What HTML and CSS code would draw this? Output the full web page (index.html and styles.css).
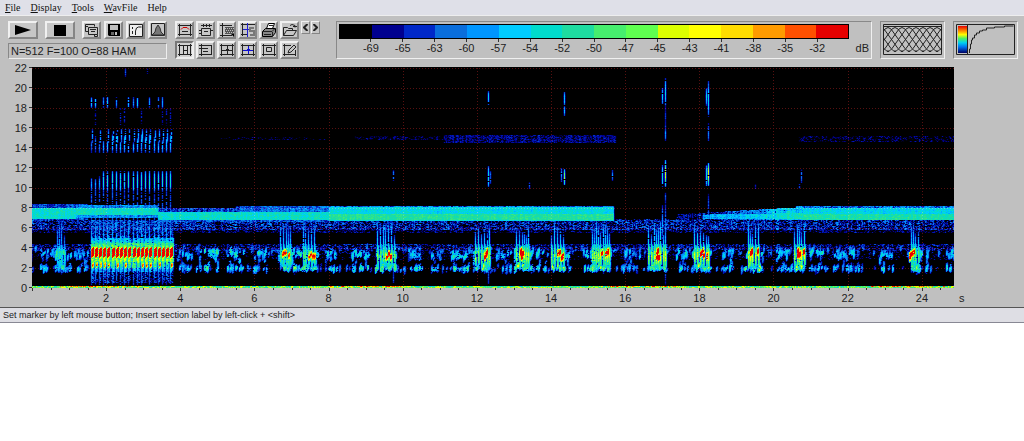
FILE: index.html
```html
<!DOCTYPE html>
<html lang="en">
<head>
  <meta charset="utf-8">
  <title>Spectrogram</title>
  <link rel="stylesheet" href="styles.css">
</head>
<body>
  <nav class="menubar">
    <a href="#file"><u>F</u>ile</a>
    <a href="#display"><u>D</u>isplay</a>
    <a href="#tools"><u>T</u>ools</a>
    <a href="#wavfile"><u>W</u>avFile</a>
    <a href="#help">Help</a>
  </nav>

  <main class="workspace">
    <header class="toolbar">
      <section class="transport">
        <div class="row">
          <button class="wide" aria-label="Play"><svg width="16" height="10"><path d="M0 0L16 5L0 10z"/></svg></button>
          <button class="wide" aria-label="Stop"><svg width="12" height="11"><path d="M0 0h12v11h-12z"/></svg></button>
          <div class="icons">
            <button aria-label="Copy"><svg class="icon" viewBox="0 0 14 14"><path class="line" d="M3.5 8.5h-3v-7h9v2M3.5 4.5h9v7h-9zM5 6.5h6M6 8.500h4M1 3.500h2M9.500 11.500v2h3v-2"/></svg></button>
            <button aria-label="Save"><svg class="icon" viewBox="0 0 14 14"><path d="M1 1h12v12H2l-1-1z"/><path fill="#c0c0c0" d="M3 2h8v5H3zM8 9h2v3H8z"/><path fill="#666" d="M4 9h3v3H4z"/></svg></button>
            <button aria-label="Transfer curve"><svg class="icon" viewBox="0 0 14 14"><path fill="#eee" d="M1 2h12v11H1z"/><path class="line" d="M.5 1.500h13v12h-13zM3.500 4v2M3.500 8v3M6.500 12V8l1-3 2-1h3"/></svg></button>
            <button aria-label="Spectrum"><svg class="icon" viewBox="0 0 14 14"><path class="line" d="M.5.5h13v12h-13z"/><path fill="#777" stroke="#333" d="M1 12l3-3 1-4 2-3 2 3 1 4 3 3z"/></svg></button>
          </div>
        </div>
        <output class="params">N=512 F=100 O=88 HAM</output>
      </section>

      <section class="tools">
        <button aria-label="Section label"><svg class="icon" viewBox="0 0 14 14"><path class="line" d="M0 2.500h14M0 11.500h14M1.500 1v12M12.500 1v12M4 8.500h6"/><path fill="none" stroke="#d00000" d="M3 6.500l2-2h4l2 2"/></svg></button>
        <button aria-label="Section width"><svg class="icon" viewBox="0 0 14 14"><path class="line" d="M2.500 5.500h9v7h-9zM0 7.500h2M0 10.500h2M12 7.500h2M5 8.500h4M2 2.500h11M4.500 1v3M7.500 1v3M10.500 1v3"/></svg></button>
        <button aria-label="Selection"><svg class="icon" viewBox="0 0 14 14"><path class="line" d="M0 2.500h12M2.500 0v14M0 12.500h12"/><path fill="#555" d="M5 4h9v7H5z"/><path fill="none" stroke="#c0c0c0" stroke-dasharray="1 1" d="M5 5.500h9M6 7.500h8M5 9.500h9"/><path d="M11 11h3v3z"/></svg></button>
        <button aria-label="Spectrum cursor"><svg class="icon" viewBox="0 0 14 14"><path class="line" d="M0 1.500h14M0 11.500h7M1.500 0v13"/><path fill="none" stroke="#2020d0" d="M6.500 0v14M2 6.500h6"/><path fill="none" stroke="#777" stroke-width="2" d="M13 5h-4v3h4v4H9"/></svg></button>
        <button aria-label="Print"><svg class="icon" viewBox="0 0 14 14"><path fill="#fff" stroke="#000" d="M4.500 5.500l2-5h6l-2 5z"/><path fill="#888" stroke="#000" d="M.5 8.500l3-3h10v4l-3 4h-10z"/><path class="line" d="M1 8.500h9l3-3M10.500 9v4M2 11.500h7M7 2.500h4"/></svg></button>
        <button aria-label="Open"><svg class="icon" viewBox="0 0 14 14"><path class="line" d="M.5 12.500v-8h4l1 1h4v2M.5 12.500l3-5h10l-3 5zM7 2.500l2-1 3 1v2M10 3.500h4"/></svg></button>
        <div class="steps">
          <button class="step" aria-label="Previous"><svg width="5" height="7"><path class="line bold" d="M4.500 0L1 3.500 4.500 7"/></svg></button>
          <button class="step" aria-label="Next"><svg width="5" height="7"><path class="line bold" d="M.5 0L4 3.500.5 7"/></svg></button>
        </div>
        <button class="pressed" aria-label="Marker mode" aria-pressed="true"><svg class="icon" viewBox="0 0 14 14"><path class="line" d="M0 2.500h14M0 11.500h14M1.500 1v12M5.500 2v10M9.500 2v10M12.500 1v12M6 7.500h3"/></svg></button>
        <button aria-label="Frequency marker"><svg class="icon" viewBox="0 0 14 14"><path class="line" d="M0 2.500h13M0 11.500h13M2.500 1v12M12.500 2v10M0 5.500h9M4 8.500h5"/></svg></button>
        <button aria-label="Cross cursor"><svg class="icon" viewBox="0 0 14 14"><path class="line" d="M0 2.500h14M0 11.500h14M1.500 1v12M12.500 1v12M2 7.500h11M7.500 2v10M6 6.500h3"/></svg></button>
        <button aria-label="Free cursor"><svg class="icon" viewBox="0 0 14 14"><path class="line" d="M0 2.500h14M0 11.500h14M1.500 1v12M12.500 1v12"/><path fill="none" stroke="#1010d0" d="M2 7.500h10M7.500 3v8M6 6.500h3"/></svg></button>
        <button aria-label="Zoom area"><svg class="icon" viewBox="0 0 14 14"><path class="line" d="M0 2.500h14M0 11.500h14M1.500 1v12M12.500 1v12M4.500 4.500h5v4h-5z"/></svg></button>
        <button aria-label="Edit labels"><svg class="icon" viewBox="0 0 14 14"><path class="line" d="M0 2.500h8M0 11.500h13M1.500 1v12M12.500 7v6M5 10l1-3 5-5 2 2-5 5z"/></svg></button>
      </section>

      <section class="panel scale">
        <div class="scale-bar">
          <i class="c0"></i><i class="c1"></i><i class="c2"></i><i class="c3"></i><i class="c4"></i><i class="c5"></i><i class="c6"></i><i class="c7"></i><i class="c8"></i><i class="c9"></i><i class="c10"></i><i class="c11"></i><i class="c12"></i><i class="c13"></i><i class="c14"></i><i class="c15"></i>
        </div>
        <div class="scale-labels">
          <span>-69</span><span>-65</span><span>-63</span><span>-60</span><span>-57</span><span>-54</span><span>-52</span><span>-50</span><span>-47</span><span>-45</span><span>-43</span><span>-41</span><span>-38</span><span>-35</span><span>-32</span>
        </div>
        <span class="unit">dB</span>
      </section>

      <section class="panel">
        <svg class="preview" viewBox="0 0 59 32">
          <defs><path id="bell" d="M-22 27.500q3 0 5-3L-3 5q3-3 6 0L17 24.500q2 3 5 3"/></defs>
          <g class="line">
            <use href="#bell" x="-16"/><use href="#bell" x="-9"/><use href="#bell" x="-2"/><use href="#bell" x="5"/><use href="#bell" x="12"/><use href="#bell" x="19"/><use href="#bell" x="26"/><use href="#bell" x="33"/><use href="#bell" x="40"/><use href="#bell" x="47"/><use href="#bell" x="54"/><use href="#bell" x="61"/><use href="#bell" x="68"/><use href="#bell" x="75"/>
            <path d="M0 2.500h59M.5.500h58v30h-58z"/>
          </g>
        </svg>
      </section>

      <section class="panel">
        <svg class="preview" viewBox="0 0 59 32">
          <defs>
            <linearGradient id="rainbow" x2="0" y2="1">
              <stop offset="0" stop-color="#e60000"/><stop offset=".2" stop-color="#ff9b00"/><stop offset=".32" stop-color="#ffff00"/><stop offset=".46" stop-color="#50f060"/><stop offset=".62" stop-color="#00d0f0"/><stop offset=".78" stop-color="#0070f0"/><stop offset="1" stop-color="#000060"/>
            </linearGradient>
          </defs>
          <path fill="url(#rainbow)" d="M2 2h9v27H2z"/>
          <path class="line" d="M.5.500h58v30h-58zM11.500 0v31M13.500 29v-4h1v-5h1v-4h1v-2h2v-3h2v-2h3v-2h3v-1h4v-2h8v-1h10v-1h9"/>
        </svg>
      </section>
    </header>

    <figure class="plot">
      <div class="y-axis">
        <span>22</span><span>20</span><span>18</span><span>16</span><span>14</span><span>12</span><span>10</span><span>8</span><span>6</span><span>4</span><span>2</span><span>0</span>
      </div>
      <canvas class="spectrogram" id="spectrogram"></canvas>
      <div class="x-axis">
        <span>2</span><span>4</span><span>6</span><span>8</span><span>10</span><span>12</span><span>14</span><span>16</span><span>18</span><span>20</span><span>22</span><span>24</span>
      </div>
      <span class="x-unit">s</span>
    </figure>
  </main>

  <footer class="statusbar">Set marker by left mouse button; Insert section label by left-click + &lt;shift&gt;</footer>

  <script src="spectrogram.js"></script>
</body>
</html>
```
FILE: styles.css
```css
* {
  box-sizing: border-box;
}

body {
  margin: 0;
  background: #fff;
  color: #222;
  font: 11px/12px "Liberation Sans", Arial, sans-serif;
}

.menubar {
  display: flex;
  gap: 10px;
  height: 15px;
  padding-left: 5px;
  background: #dfe0e8;
  font: 10px/15px "Liberation Serif", "Times New Roman", serif;
}

.menubar a {
  color: #111;
  text-decoration: none;
}

.workspace {
  background: #c0c0c0;
  border-top: 1px solid #eee;
  border-bottom: 1px solid #555;
}

.toolbar {
  display: flex;
  align-items: flex-start;
  gap: 8px;
  padding: 5px 6px 0 8px;
}

.transport {
  width: 159px;
}

.row {
  display: flex;
  justify-content: space-between;
}

.icons {
  display: flex;
  gap: 3px;
}

button {
  display: flex;
  align-items: center;
  justify-content: center;
  width: 19px;
  height: 18px;
  padding: 0;
  background: #c6c6c6;
  border: 2px solid;
  border-color: #f0f0f0 #858585 #858585 #f0f0f0;
}

.wide {
  width: 30px;
}

.pressed {
  background: #d2d2d2;
  border-color: #777 #eee #eee #777;
}

.icon {
  flex: none;
  width: 14px;
  height: 14px;
}

.line {
  fill: none;
  stroke: #222;
}

.bold {
  stroke-width: 2;
}

.params {
  display: block;
  height: 16px;
  margin-top: 4px;
  padding-left: 2px;
  border: 1px solid;
  border-color: #888 #eee #eee #888;
  line-height: 15px;
}

.tools {
  display: grid;
  grid-template-columns: repeat(6, 19px) 20px;
  gap: 2px;
  width: 153px;
}

.steps {
  display: flex;
  gap: 1px;
  grid-row: 1 / 3;
  grid-column: 7;
}

.step {
  width: 9px;
  height: 13px;
  border-width: 1px;
}

.panel {
  height: 38px;
  padding: 2px;
  border: 1px solid;
  border-color: #888 #f0f0f0 #f0f0f0 #888;
}

.scale {
  display: grid;
  grid-template-columns: 1fr 20px;
  grid-template-rows: 15px 1fr;
  flex: 1;
}

.scale-bar {
  display: flex;
  border: 1px solid #000;
}

.scale-bar i {
  flex: 1;
}

.scale-labels {
  display: grid;
  grid-row: 2;
  grid-template-columns: repeat(15, 2fr);
  padding: 0 3.125%;
  text-align: center;
}

.scale-labels span::before {
  content: "";
  display: block;
  width: 1px;
  height: 3px;
  margin: 0 auto;
  background: #333;
}

.unit {
  grid-row: 2;
  padding-top: 3px;
  text-align: right;
}

.c0 { background: #000; }
.c1 { background: #00008f; }
.c2 { background: #0028c8; }
.c3 { background: #0a6edc; }
.c4 { background: #0096ff; }
.c5 { background: #00ccff; }
.c6 { background: #00dccc; }
.c7 { background: #1edca0; }
.c8 { background: #46ee6e; }
.c9 { background: #5fff50; }
.c10 { background: #dcff00; }
.c11 { background: #ffff00; }
.c12 { background: #ffdc00; }
.c13 { background: #ff9b00; }
.c14 { background: #ff5000; }
.c15 { background: #e60000; }

.preview {
  display: block;
  width: 59px;
  height: 32px;
}

.plot {
  display: grid;
  grid-template-columns: 32px 1fr 70px;
  margin: 8px 0 0;
  padding-bottom: 3px;
}

.y-axis {
  display: flex;
  flex-direction: column;
  justify-content: space-between;
  height: 232px;
  margin: -5px 0 -8px;
  text-align: right;
}

.y-axis span::after {
  content: "";
  display: inline-block;
  width: 3px;
  height: 1px;
  margin-left: 2px;
  background: #333;
  vertical-align: 4px;
}

.spectrogram {
  display: block;
  width: 100%;
  height: 224px;
}

.x-axis {
  display: grid;
  grid-column: 2;
  grid-template-columns: repeat(12, 1fr);
  margin: 1px -5px 0 37px;
  text-align: center;
}

.x-unit {
  margin-top: 1px;
  padding-left: 5px;
}

.statusbar {
  height: 15px;
  padding-left: 3px;
  background: #dedee4;
  border-bottom: 1px solid #888894;
  font-size: 9px;
  line-height: 14px;
}
```
FILE: spectrogram.js
```js
const canvas = document.querySelector('#spectrogram');
const ctx = canvas.getContext('2d');
const W = canvas.width = canvas.clientWidth;
const H = 221;
canvas.height = H + 3;

const duration = 24.87;
const palette = Array.from(document.querySelectorAll('.scale-bar i')).map((el) =>
  getComputedStyle(el).backgroundColor.match(/\d+/g).map(Number));

// repeatable noise
let seed = 7;
function rnd() {
  seed = (seed * 1664525 + 1013904223) % 4294967296;
  return seed / 4294967296;
}

const pps = W / duration;
const level = new Float32Array(W * H);
const toX = (t) => Math.round(t * pps);
const toY = (f) => Math.round(H - f * 10);

function put(x, y, v) {
  if (x < 0 || x >= W || y < 0 || y >= H) return;
  const i = y * W + x;
  if (v > level[i]) level[i] = v;
}

// horizontal band between two frequencies
function band(t0, t1, lo, hi, v, spread, density = 1) {
  for (let x = toX(t0); x < toX(t1); x++) {
    const column = (rnd() - 0.5) * spread * 0.6;
    for (let y = toY(hi); y < toY(lo); y++) {
      if (rnd() < density) put(x, y, v + column + (rnd() - 0.5) * spread);
    }
  }
}

// vertical streak, strongest in the middle
function streak(x, lo, hi, v, gap = 0.1) {
  const mid = (lo + hi) / 2;
  for (let y = toY(hi); y <= toY(lo); y++) {
    const d = Math.abs((H - y) / 10 - mid) / ((hi - lo) / 2 + 0.05);
    if (rnd() > gap) put(x, y, v * (1 - d * d * 0.7) + (rnd() - 0.5) * 2);
  }
}

// small patches of short strokes
function patches(t0, t1, f, height, v, amount) {
  const n = (t1 - t0) * pps * amount;
  for (let k = 0; k < n; k++) {
    const x = toX(t0 + rnd() * (t1 - t0));
    const c = f + (rnd() - 0.5) * height;
    const s = 0.1 + rnd() * 0.3;
    const w = v * (0.55 + rnd() * 0.6);
    streak(x, c - s, c + s, w);
    streak(x + 1, c - s + 0.1, c + s + 0.1, w * 0.8);
  }
}

// steady insect tone
band(0, 1.5, 6.8, 8.4, 2.3, 3);
band(0, 1.2, 6.9, 8, 5.8, 2);
band(1.2, 3.4, 7, 8.3, 3.2, 3);
band(1.2, 3.4, 7.3, 8, 6, 2);
band(3.4, 8, 6.6, 8, 2, 3.4);
band(3.4, 8, 6.8, 7.6, 5.8, 2);
band(5.5, 8, 7.3, 8.2, 2.5, 3);
band(8, 15.7, 6.7, 8.1, 5.4, 1.8);
band(8, 15.7, 6.8, 7.4, 6.8, 1.4);
band(7.8, 15.7, 8, 8.2, 3, 4);
band(15.7, 17.6, 6.6, 6.9, 2, 3, 0.4);
for (let t = 17.4; t < 20.8; t += 0.1) {
  const k = (t - 17.4) / 3.4;
  band(t, t + 0.12, 6.8, 7.4 + k * 0.7, 0.8 + k * 4.4, 3, 0.6 + k * 0.4);
  if (t > 18.1) band(t, t + 0.12, 6.9, 7.3 + k * 0.2, 3.2 + k * 2.8, 2.6);
}
band(20.8, duration, 6.8, 8, 5.3, 2);
band(20.8, duration, 6.8, 7.4, 6.5, 1.8);
band(20.6, duration, 7.9, 8.2, 3, 4);

// speckle under the tone
band(0, duration, 5.8, 6.8, 1.7, 4, 0.75);
band(0, duration, 5.5, 5.9, 0.7, 2.6, 0.6);
band(0, duration, 3.7, 4.4, 1.1, 3.6, 0.65);
band(0, duration, 2.8, 3.7, 0.4, 2.6, 0.3);

// call bands at 3.5 and 2 kHz
const calls = [
  [0.2, 0.6, 6], [0.6, 1.05, 8], [1.1, 1.5, 6], [3.9, 4.3, 6], [4.4, 5, 8],
  [5.2, 5.7, 8], [5.9, 6.4, 7], [6.6, 7.2, 8], [7.2, 7.7, 8], [7.9, 8.2, 7], [8.6, 9.1, 8], [9.2, 9.8, 9],
  [10.1, 10.5, 7], [10.75, 11, 6], [11.3, 12.3, 8], [12.5, 12.9, 6], [13, 13.5, 8],
  [13.6, 13.9, 7], [14, 14.5, 8], [14.85, 15.6, 8], [15.8, 16.4, 6], [16.6, 17.1, 8],
  [17.35, 17.7, 7], [17.8, 18.3, 8], [18.6, 18.9, 7], [19.2, 19.7, 8], [20.05, 20.8, 7],
  [20.95, 21.3, 7], [21.6, 22.3, 6], [22.85, 23.2, 7], [23.6, 24, 7], [24.1, 24.25, 6], [24.6, 24.85, 7]
];
calls.forEach(([a, b, v]) => {
  patches(a, b, 3.4, 0.7, v * 0.95, 0.7);
  patches(a, b, 2.7, 1.2, v * 0.7, 0.25);
  if (v > 5) patches(a, b, 1.95, 0.25, v, 0.45);
});
patches(0, duration, 1.9, 0.3, 4, 0.15);
patches(0, duration, 3.7, 0.8, 4, 0.18);

// click bursts
const bursts = [
  [0.68, 0.9, 9], [6.7, 6.95, 11], [7.3, 7.65, 11], [9.3, 9.8, 12], [11.95, 12.35, 13],
  [13.05, 13.4, 13], [14.0, 14.35, 13], [15.1, 15.6, 13], [16.62, 17.08, 14],
  [17.85, 18.25, 14], [19.3, 19.6, 14], [20.55, 20.85, 14], [23.7, 23.9, 12]
];
bursts.forEach(([a, b, v]) => {
  for (let x = toX(a); x <= toX(b); x += 2 + Math.floor(rnd() * 2)) {
    streak(x, 1.8, 5.2 + rnd() * 1.6, v * 0.55, 0.04);
    streak(x, 1.9, 4.5, v * 0.78, 0.1);
    streak(x + 1, 2, 4.4, v * 0.55);
  }
  patches(a, b, 2.1, 0.4, v * 0.75, 0.4);
  if (v > 10) {
    for (let k = 0; k < 4; k++) {
      const c = 3 + rnd() * 0.7;
      const x = toX(b) - 2 - Math.floor(rnd() * 8);
      streak(x, c - 0.4, c + 0.4, v + 4);
      streak(x + 1, c - 0.3, c + 0.5, v + 4);
    }
  }
});

// trill with harmonics
const trill = [1.58, 3.82];
band(trill[0], trill[1], 0.5, 6.8, 1.4, 4, 0.7);
band(trill[0], trill[1], 1.6, 5, 3.5, 4, 0.8);
band(trill[0], trill[1], 2, 4.5, 6.5, 4.5, 0.8);
let pulse = 0;
for (let x = toX(trill[0]); x < toX(trill[1]); x += 4 + (pulse % 5 === 0 ? 1 : 0)) {
  pulse++;
  streak(x, 0.4, 7, 6);
  streak(x, 4.5, 11, 3.5, 0.3);
  for (let k = 0; k < 3; k++) streak(x + k, 1.8, 5, 11 - k, 0.1);
  for (let k = 0; k < 3; k++) {
    for (let y = toY(3.95) - k; y < toY(3.05) - k; y++) put(x + k, y, 14.8 + rnd() * 2);
  }
  if (rnd() > 0.5) {
    streak(x + 1, 2, 2.6, 15);
    streak(x + 2, 2.1, 2.7, 14);
  }
  // dark gap between pulses
  for (let y = toY(2.6); y < toY(0.8); y++) level[y * W + x + 3] *= 0.3;
  const edge = x > toX(1.9) ? 1 : 0.65;
  streak(x, 9.8, 10.8 + rnd() * 0.9 * edge, 8 * edge);
  streak(x, 10, edge === 1 ? 11.7 : 10.9, 8 * edge);
  streak(x, 13.6, 14.5 + rnd(), 6 * edge);
  if (x > toX(2.2) || rnd() > 0.5) streak(x + 1, 14.6, 15.9, 5.5, 0.2);
  if (rnd() > 0.3) streak(x, 18.1, 19.1, 3 + rnd() * 5);
  if (rnd() > 0.6) streak(x, 16.3, 18, 2, 0.4);
}
streak(toX(2.52), 21.2, 22, 3);
streak(toX(3.1), 21.5, 22, 2);

// faint second harmonic of the tone
band(11.1, 15.75, 14.5, 15.3, 1, 2, 0.85);
band(8.7, 11.1, 14.8, 15.2, 0.6, 1.8, 0.5);
band(5.1, 7.9, 14.8, 15.1, 0.5, 1.6, 0.25);
band(20.7, duration, 14.6, 15.2, 0.6, 1.8, 0.5);

// single broadband marks: time, low, high, level
[
  [12.3, 18.4, 19.7, 7], [12.3, 10.2, 12.2, 8], [12.35, 10.5, 11.8, 4], [14.35, 18.4, 19.6, 7],
  [14.35, 17.3, 18.2, 6], [14.35, 10.4, 11.9, 12], [14.28, 10.7, 12, 5], [15.65, 10.8, 11.8, 5],
  [9.75, 10.8, 11.8, 5], [13.4, 10, 10.6, 4], [17, 18.5, 20, 7], [17.07, 18.3, 21, 7],
  [17.07, 14.8, 18.2, 2.5], [17.07, 14.9, 16, 5], [17, 10.2, 12.3, 8], [17.07, 10.2, 12.8, 13], [17.07, 8.7, 9.6, 3],
  [18.17, 18.3, 20, 7], [18.24, 17.2, 20.7, 7], [18.24, 14.6, 16.5, 4], [18.17, 10.2, 12.3, 8],
  [18.24, 10.3, 12.6, 13], [18.24, 7, 9.5, 3], [17, 5, 8.3, 5], [17.07, 0.4, 8.8, 4],
  [20.7, 10, 10.4, 3], [20.75, 10.6, 11.9, 4], [19.5, 10, 10.4, 2], [9.75, 0.4, 2, 3], [12.3, 0.4, 2, 3]
].forEach(([t, lo, hi, v]) => streak(toX(t), lo, hi, v));

// low frequency hum along the axis
for (let x = 0; x < W; x++) {
  put(x, H - 2, 4 + rnd() * 7);
  put(x, H - 1, 6 + rnd() * 5);
  if (Math.sin(x / 43) > 0.6 && rnd() > 0.4) put(x, H - 2, 11 + rnd() * 5);
}

// soften neighbouring columns a little
const smooth = level.map((v, i) => v * 0.78 + ((level[i - 1] || 0) + (level[i + 1] || 0)) * 0.13);

const image = ctx.createImageData(W, H);
for (let i = 0; i < smooth.length; i++) {
  const v = Math.max(0, Math.min(15, smooth[i]));
  const a = palette[Math.floor(v)];
  const b = palette[Math.min(15, Math.floor(v) + 1)];
  const k = v % 1;
  for (let c = 0; c < 3; c++) image.data[i * 4 + c] = a[c] + (b[c] - a[c]) * k;
  image.data[i * 4 + 3] = 255;
}
ctx.putImageData(image, 0, 0);

// dotted grid, showing only over the dark parts
ctx.globalCompositeOperation = 'lighten';
ctx.fillStyle = '#581010';
for (let f = 2; f <= 22; f += 2) {
  for (let x = 0; x < W; x += 3) ctx.fillRect(x, toY(f), 1, 1);
}
for (let t = 2; t < duration; t += 2) {
  for (let y = 1; y < H; y += 3) ctx.fillRect(toX(t), y, 1, 1);
}

// time ticks
ctx.globalCompositeOperation = 'source-over';
ctx.fillStyle = '#333';
for (let n = 0; n * 0.5 < duration; n++) {
  ctx.fillRect(toX(n * 0.5), H, 1, n % 4 === 0 ? 3 : 2);
}
```
